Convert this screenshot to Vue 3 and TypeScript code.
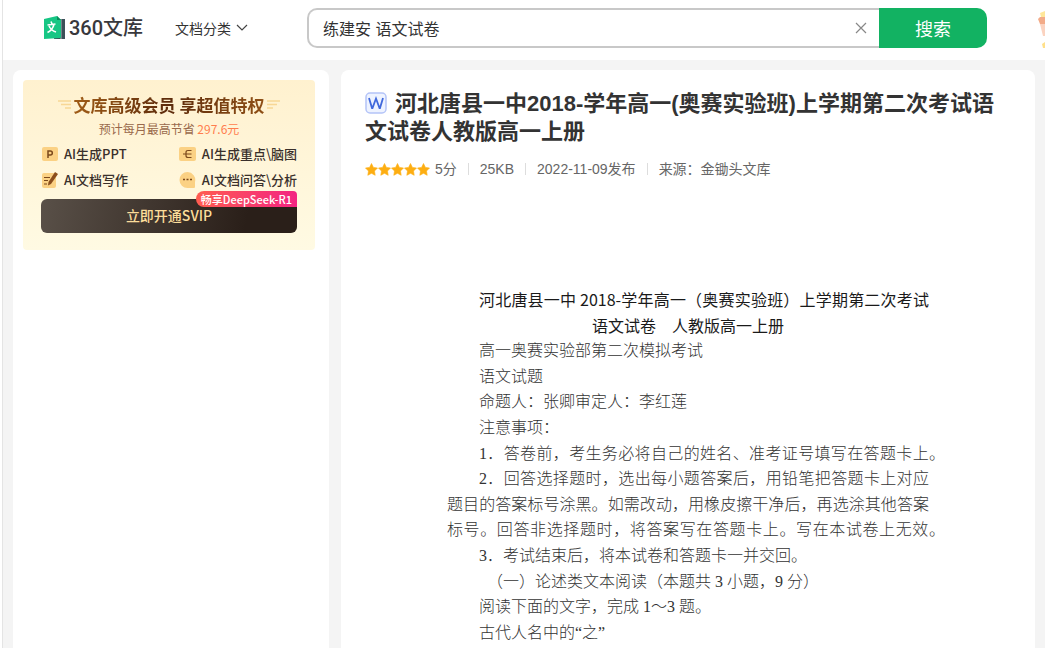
<script setup lang="ts">
import { ref } from 'vue'

interface DocLine {
  text: string
  kind: string
}

const query = ref('练建安 语文试卷')

const lines: DocLine[] = [
  { text: '河北唐县一中 2018-学年高一（奥赛实验班）上学期第二次考试', kind: 'heading wide' },
  { text: '语文试卷　人教版高一上册', kind: 'heading' },
  { text: '高一奥赛实验部第二次模拟考试', kind: 'indent' },
  { text: '语文试题', kind: 'indent' },
  { text: '命题人：张卿审定人：李红莲', kind: 'indent' },
  { text: '注意事项：', kind: 'indent' },
  { text: '1．答卷前，考生务必将自己的姓名、准考证号填写在答题卡上。', kind: 'indent full hang' },
  { text: '2．回答选择题时，选出每小题答案后，用铅笔把答题卡上对应', kind: 'indent full' },
  { text: '题目的答案标号涂黑。如需改动，用橡皮擦干净后，再选涂其他答案', kind: 'full' },
  { text: '标号。回答非选择题时，将答案写在答题卡上。写在本试卷上无效。', kind: 'full hang' },
  { text: '3．考试结束后，将本试卷和答题卡一并交回。', kind: 'indent' },
  { text: '（一）论述类文本阅读（本题共 3 小题，9 分）', kind: 'section' },
  { text: '阅读下面的文字，完成 1～3 题。', kind: 'indent' },
  { text: '古代人名中的“之”', kind: 'indent' },
]
</script>

<template>
  <div class="page">
    <header class="topbar">
      <a class="logo" href="#">
        <svg width="22" height="24" viewBox="0 0 22 24" aria-hidden="true">
          <path d="M13 3h8v20H10z" fill="#3d4f58" />
          <path d="M17 3v20" stroke="#fff" stroke-width=".6" />
          <path d="M0 3 13 0l4 4v17q0 1-1 1L0 23z" fill="#17c684" />
          <path d="M13 0 17 4h-4z" fill="#0a8c5c" />
          <path d="M3.500 9l8-1M7 5.500l1 2.500M10 8.500Q8.500 14 3.500 16.500M5 10q2 4.500 7 6" fill="none" stroke="#fff" stroke-width="1.600" />
        </svg>
        <span>360文库</span>
      </a>
      <button class="category" type="button">
        文档分类
        <svg width="12" height="8" viewBox="0 0 12 8" aria-hidden="true"><path d="M1 1l5 5 5-5" fill="none" stroke="#444" stroke-width="1.200" /></svg>
      </button>
      <form class="search" @submit.prevent>
        <div class="field">
          <input v-model="query" type="text" aria-label="搜索文档" />
          <button class="clear" type="button" aria-label="清空" @click="query = ''">
            <svg width="12" height="12" viewBox="0 0 12 12"><path d="M1 1l10 10M11 1L1 11" stroke="#888" stroke-width="1.200" /></svg>
          </button>
        </div>
        <button class="submit" type="submit">搜索</button>
      </form>
      <svg class="mascot" width="7" height="40" viewBox="0 0 7 40" aria-hidden="true">
        <path d="M2 5l5-2v6H3z" fill="#ffe79a" />
        <path d="M0 11l2-2h5v7H2z" fill="#f3ab88" />
        <path d="M2 16h5v12H5z" fill="#fbd3c0" />
        <path d="M4 36l3-2v6H5z" fill="#ffe08a" />
      </svg>
    </header>

    <main class="content">
      <aside class="side">
        <section class="promo">
          <h2>
            <svg width="13" height="10" viewBox="0 0 13 10" aria-hidden="true"><path d="M0 1h13M3 4.500h10M7 8h6" stroke="#f8d795" stroke-width="1.500" /></svg>
            <span>文库高级会员 享超值特权</span>
            <svg width="13" height="10" viewBox="0 0 13 10" aria-hidden="true"><path d="M0 1h13M0 4.500h10M0 8h6" stroke="#f8d795" stroke-width="1.500" /></svg>
          </h2>
          <p class="saving">预计每月最高节省 <em>297.6元</em></p>
          <ul class="perks">
            <li>
              <svg width="17" height="16" viewBox="0 0 17 16" aria-hidden="true"><rect x="1" y="1" width="16" height="14" rx="2" fill="#fbd184" /><path d="M7 12V5h2.300q2 0 2 2t-2 2H7" fill="none" stroke="#7b481b" stroke-width="1.500" /></svg>
              AI生成PPT
            </li>
            <li>
              <svg width="17" height="16" viewBox="0 0 17 16" aria-hidden="true"><rect x="0" y="1" width="17" height="14" rx="2" fill="#fbd184" /><path d="M12.500 4.500H9Q7 4.500 7 6.500v3q0 2 2 2h3.500M4 8h8.500" fill="none" stroke="#7b481b" stroke-width="1.200" /></svg>
              AI生成重点\脑图
            </li>
            <li>
              <svg width="17" height="16" viewBox="0 0 17 16" aria-hidden="true"><rect x="1" y="1" width="14" height="15" rx="2" fill="#fbd184" /><path d="M3 5.500h6M3 8.500h4M3 12h3" stroke="#7b481b" stroke-width="1.200" /><path d="M14 0l3 2-7 10-3 1.500.5-3.500z" fill="#8a4d1c" /></svg>
              AI文档写作
            </li>
            <li>
              <svg width="17" height="16" viewBox="0 0 17 16" aria-hidden="true"><path d="M8.500 0a8 8 0 1 0 0 16H15q1 0 1-1v-5A8 8 0 0 0 8.500 0z" fill="#fbd184" /><path d="M4 7.500h2M7.500 7.500h2M11 7.500h2" stroke="#7b481b" stroke-width="1.700" /></svg>
              AI文档问答\分析
            </li>
          </ul>
          <button class="svip" type="button">立即开通SVIP<span class="tag">畅享DeepSeek-R1</span></button>
        </section>
      </aside>

      <article class="doc">
        <h1>
          <svg class="word" width="22" height="22" viewBox="0 0 22 22" aria-hidden="true"><rect x="1" y="1" width="20" height="20" rx="4" fill="#eef3ff" stroke="#b4c4f8" stroke-width="1.500" /><path d="M4 6l3 10h.5L11 6.500 14.500 16h.5l3-10" fill="none" stroke="#4169dc" stroke-width="1.800" /></svg>河北唐县一中2018-学年高一(奥赛实验班)上学期第二次考试语文试卷人教版高一上册
        </h1>
        <div class="meta">
          <span class="score">
            <svg v-for="n in 5" :key="n" width="13" height="13" viewBox="0 0 13 13" aria-hidden="true"><path d="M6.500 .5l1.900 3.900 4.100.6-3 3 .7 4.300-3.700-2-3.700 2 .7-4.300-3-3 4.100-.6z" fill="#fdae12" stroke="#fdae12" stroke-width=".6" stroke-linejoin="round" /></svg>
            <span>5分</span>
          </span>
          <span>25KB</span>
          <span>2022-11-09发布</span>
          <span>来源：金锄头文库</span>
        </div>
        <div class="paper">
          <p v-for="line in lines" :key="line.text" :class="line.kind">{{ line.text }}</p>
        </div>
      </article>
    </main>
  </div>
</template>

<style>
body {
  margin: 0;
  overflow: hidden;
}
</style>

<style scoped>
.page {
  box-sizing: border-box;
  height: 100vh;
  overflow: hidden;
  display: flex;
  flex-direction: column;
  margin-left: 2px;
  border-left: 1px solid #e4e4e4;
  background: #f4f4f4;
  color: #333;
  font-family: "Liberation Sans", "Noto Sans CJK SC", sans-serif;
}
button,
input {
  font: inherit;
  border: 0;
  padding: 0;
  background: none;
}
button {
  cursor: pointer;
}
.topbar {
  flex: none;
  display: flex;
  align-items: center;
  box-sizing: border-box;
  height: 60px;
  padding: 0 0 4px 41px;
  background: #fff;
}
.logo {
  display: flex;
  align-items: center;
  gap: 3px;
  width: 131px;
  color: #38383c;
  text-decoration: none;
  font: 500 20px/26px Roboto, "Noto Sans CJK SC", sans-serif;
  white-space: nowrap;
}
.category {
  display: flex;
  align-items: center;
  gap: 5px;
  width: 132px;
  font-size: 14px;
  color: #333;
  white-space: nowrap;
}
.search {
  flex: 1;
  display: flex;
  height: 40px;
}
.field {
  flex: 1;
  display: flex;
  align-items: center;
  box-sizing: border-box;
  padding: 0 12px 0 14px;
  border: 2px solid #c8c8c8;
  border-right: 0;
  border-radius: 10px 0 0 10px;
}
.field input {
  flex: 1;
  min-width: 0;
  font-size: 16px;
  color: #333;
  outline: 0;
}
.clear {
  display: flex;
}
.submit {
  width: 108px;
  border-radius: 0 10px 10px 0;
  background: #12b262;
  color: #fff;
  font-size: 18px;
}
.mascot {
  flex: none;
  margin-left: 51px;
}
.content {
  flex: 1;
  display: flex;
  gap: 12px;
  padding: 10px 10px 0;
}
.side,
.doc {
  box-sizing: border-box;
  background: #fff;
  border-radius: 8px 8px 0 0;
}
.side {
  flex: none;
  width: 316px;
  padding: 10px 14px 10px 10px;
}
.promo {
  box-sizing: border-box;
  height: 170px;
  padding: 13px 18px;
  border-radius: 4px;
  background: linear-gradient(#fff1cf, #fffae3);
  font-family: "Noto Sans CJK SC", sans-serif;
}
.promo h2 {
  display: flex;
  justify-content: center;
  align-items: center;
  gap: 3px;
  margin: 0;
  font-size: 17px;
  line-height: 24px;
  white-space: nowrap;
}
.promo h2 span {
  color: transparent;
  background: linear-gradient(90deg, #a05c17, #5d2b0b 50%, #8f4f16);
  background-clip: text;
}
.saving {
  margin: 0;
  color: #99694b;
  font-size: 12px;
  line-height: 24px;
  text-align: center;
}
.saving em {
  color: #ff7d4d;
  font-style: normal;
}
.perks {
  display: grid;
  grid-template-columns: 1fr auto;
  margin: 0;
  padding: 0;
  list-style: none;
  color: #3a302b;
  font-size: 13px;
  font-weight: 500;
  line-height: 26px;
}
.perks li {
  display: flex;
  align-items: center;
  gap: 6px;
  white-space: nowrap;
}
.svip {
  position: relative;
  display: block;
  width: 100%;
  height: 34px;
  margin-top: 6px;
  padding-bottom: 2px;
  border-radius: 6px;
  background: linear-gradient(100deg, #595048, #2a1f19 80%);
  color: #fbdd9a;
  font-size: 14px;
  font-weight: 500;
}
.tag {
  position: absolute;
  top: -8px;
  right: 0;
  padding: 0 5px;
  border-radius: 8px 4px 0 8px;
  background: linear-gradient(90deg, #ff5d50, #f32482);
  color: #fff;
  font-size: 11px;
  line-height: 16px;
}
.doc {
  flex: 1;
  min-width: 0;
  padding: 20px 24px 0;
}
h1 {
  margin: 0;
  font-size: 22px;
  line-height: 28px;
  color: #333;
}
.word {
  margin-right: 8px;
  vertical-align: -3px;
}
.meta {
  display: flex;
  align-items: center;
  margin-top: 12px;
  font-size: 14px;
  line-height: 22px;
  color: #666;
}
.meta > span + span::before {
  content: "";
  display: inline-block;
  width: 1px;
  height: 12px;
  margin: 0 11px;
  background: #ddd;
  vertical-align: -1px;
}
.score {
  display: flex;
  align-items: center;
}
.score > span {
  margin-left: 5px;
}
.paper {
  padding: 107px 82px 0;
  font-family: "Liberation Serif", "Noto Sans CJK SC", serif;
  font-size: 16px;
  font-weight: 300;
  line-height: 1.6;
  color: #333;
}
.paper p {
  margin: 0;
  white-space: nowrap;
}
.paper .heading {
  color: #1a1a1a;
  font-family: "Noto Sans CJK SC", sans-serif;
  font-weight: 400;
  text-align: center;
}
.paper .wide {
  padding-left: 32px;
  text-align: justify;
  text-align-last: justify;
  white-space: normal;
}
.paper .indent {
  padding-left: 32px;
}
.paper .section {
  padding-left: 40px;
}
.paper .full {
  white-space: normal;
  text-align: justify;
  text-align-last: justify;
}
.paper .hang {
  margin-right: -16px;
}
</style>
